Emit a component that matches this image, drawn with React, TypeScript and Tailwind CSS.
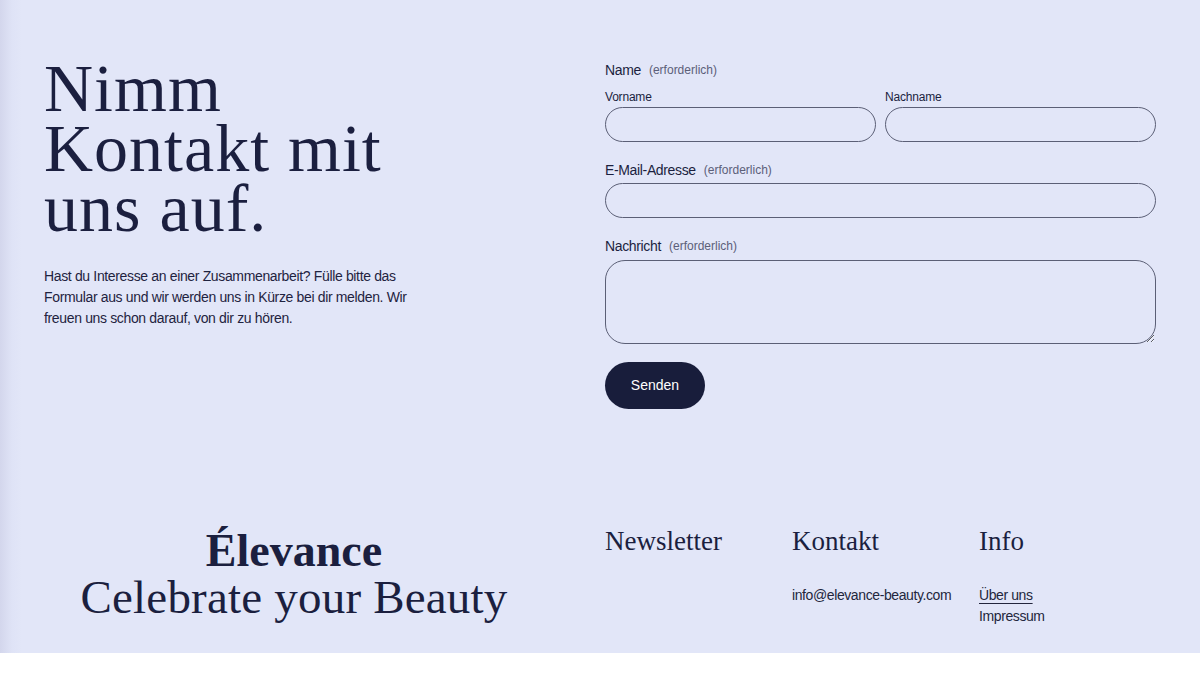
const serif = { fontFamily: '"Liberation Serif", "Times New Roman", serif' };
const sans = { fontFamily: '"Liberation Sans", Arial, sans-serif' };

const Label = ({ text, required }: { text: string; required?: boolean }) => (
  <div className="flex items-center gap-2 h-5">
    <span className="text-[14px] tracking-[-0.35px] text-[#1b1f3f]">{text}</span>
    {required && <span className="text-[12px] text-[#5c6079]">(erforderlich)</span>}
  </div>
);

const App = () => {
  return (
    <div className="min-h-[675px] bg-white" style={sans}>
      <div className="bg-[linear-gradient(to_right,#d3d6ec_0px,#dfe3f6_12px,#e2e6f8_22px)] text-[#1b1f3f]">
        {/* contact */}
        <section className="mx-auto w-[1112px] grid grid-cols-2 gap-[10px] pt-[58px] pb-[41px]">
          <div>
            <h1 className="text-[68px] leading-[60px] tracking-[1px] w-[400px]" style={serif}>
              Nimm Kontakt mit uns auf.
            </h1>
            <p className="mt-7 text-[14px] leading-[21px] tracking-[-0.35px] w-[372px] text-[#1f2340]">
              Hast du Interesse an einer Zusammenarbeit? Fülle bitte das Formular aus und wir werden uns in Kürze bei dir melden. Wir freuen uns schon darauf, von dir zu hören.
            </p>
          </div>

          <form className="pt-[2px]" onSubmit={(e) => e.preventDefault()}>
            <Label text="Name" required />
            <div className="mt-2 grid grid-cols-2 gap-[9px]">
              <div>
                <div className="text-[12px] leading-4 tracking-[-0.2px] text-[#1b1f3f] pt-px">Vorname</div>
                <input className="mt-[2px] h-[35px] w-full rounded-full border-[1.5px] border-[#5b5f76] bg-transparent px-4 outline-none" />
              </div>
              <div>
                <div className="text-[12px] leading-4 tracking-[-0.2px] text-[#1b1f3f] pt-px">Nachname</div>
                <input className="mt-[2px] h-[35px] w-full rounded-full border-[1.5px] border-[#5b5f76] bg-transparent px-4 outline-none" />
              </div>
            </div>

            <div className="mt-[18px]">
              <Label text="E-Mail-Adresse" required />
              <input className="mt-[3px] h-[35px] w-full rounded-full border-[1.5px] border-[#5b5f76] bg-transparent px-4 outline-none" />
            </div>

            <div className="mt-[18px]">
              <Label text="Nachricht" required />
              <textarea className="mt-1 block h-[84px] w-full rounded-[20px] border-[1.5px] border-[#5b5f76] bg-transparent px-4 py-2 outline-none" />
            </div>

            <button
              type="submit"
              className="mt-[18px] h-[47px] w-[100px] rounded-full bg-[#181d3b] text-[14px] text-white"
            >
              Senden
            </button>
          </form>
        </section>

        {/* footer */}
        <footer className="mx-auto w-[1112px] grid grid-cols-2 gap-[10px] pt-[74px] pb-[26px]">
          <div className="pr-[51px] pt-1 text-center" style={serif}>
            <div className="text-[46px] leading-[46px] font-bold">Élevance</div>
            <div className="text-[47px] leading-[46px] tracking-[0.2px]">Celebrate your Beauty</div>
          </div>

          <div className="grid grid-cols-3 gap-[10px]">
            <div>
              <h3 className="text-[27px] leading-[34px]" style={serif}>Newsletter</h3>
            </div>
            <div>
              <h3 className="text-[27px] leading-[34px]" style={serif}>Kontakt</h3>
              <div className="mt-[27px] text-[14px] leading-[21px] tracking-[-0.4px] text-[#23263d]">info@elevance-beauty.com</div>
            </div>
            <div>
              <h3 className="text-[27px] leading-[34px]" style={serif}>Info</h3>
              <div className="mt-[27px] text-[14px] leading-[21px] tracking-[-0.4px] text-[#23263d]">
                <a href="#" className="underline underline-offset-[3px]">Über uns</a>
                <div>Impressum</div>
              </div>
            </div>
          </div>
        </footer>
      </div>
    </div>
  );
};

export default App;
